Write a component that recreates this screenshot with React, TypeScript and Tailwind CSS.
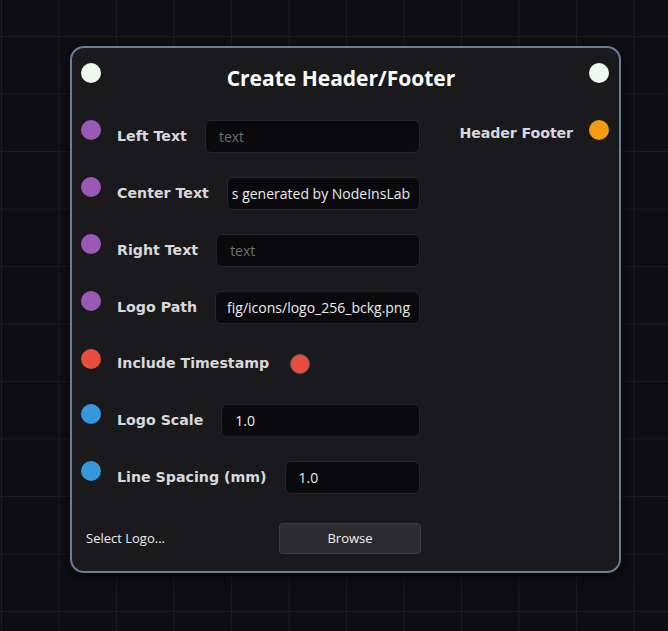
import React from 'react';

type Row = {
  label: string;
  color: string;
  kind: 'input' | 'check';
  value?: string;
  placeholder?: boolean;
  padLeft?: string;
  h: string;
};

const rows: Row[] = [
  { label: 'Left Text', color: 'bg-[#9b59b6]', kind: 'input', value: 'text', placeholder: true, h: 'h-[33px]' },
  { label: 'Center Text', color: 'bg-[#9b59b6]', kind: 'input', value: 's generated by NodeInsLab', padLeft: 'pl-[4px]', h: 'h-[33px]' },
  { label: 'Right Text', color: 'bg-[#9b59b6]', kind: 'input', value: 'text', placeholder: true, h: 'h-[33px]' },
  { label: 'Logo Path', color: 'bg-[#9b59b6]', kind: 'input', value: 'fig/icons/logo_256_bckg.png', padLeft: 'pl-[11px]', h: 'h-[33px]' },
  { label: 'Include Timestamp', color: 'bg-[#e74c3c]', kind: 'check', h: 'h-[31px]' },
  { label: 'Logo Scale', color: 'bg-[#3498db]', kind: 'input', value: '1.0', h: 'h-[33px]' },
  { label: 'Line Spacing (mm)', color: 'bg-[#3498db]', kind: 'input', value: '1.0', h: 'h-[33px]' },
];

function Socket({ color }: { color: string }) {
  return <span className={`block w-5 h-5 rounded-full shrink-0 ${color}`} />;
}

function Field({ row }: { row: Row }) {
  if (row.kind === 'check') {
    return (
      <span className="ml-[21px] block w-5 h-5 rounded-full bg-[#e74c3c] border border-[#5a5a5e]" />
    );
  }
  return (
    <div
      className={`ml-[18px] flex-1 min-w-0 h-[33px] flex items-center overflow-hidden rounded-md border border-[#26262a] bg-[#0a0a0c] pr-[8px] ${
        row.padLeft ?? 'pl-[13px]'
      }`}
    >
      <span
        className={`shrink-0 whitespace-nowrap text-[14px] font-['Open_Sans',sans-serif] ${
          row.placeholder ? 'text-[#6e6e72]' : 'text-[#ececec]'
        }`}
      >
        {row.value}
      </span>
    </div>
  );
}

export default function App() {
  return (
    <div className="w-[668px] h-[631px] overflow-hidden bg-[#0f0f13] bg-[linear-gradient(to_right,#1c1c21_1px,transparent_1px),linear-gradient(to_bottom,#1c1c21_1px,transparent_1px)] bg-[size:57.5px_57.5px] bg-[position:1px_36px] pt-[46px] pl-[70px]">
      <div className="w-[551px] h-[527px] rounded-[14px] border-2 border-[#6a7d96] bg-[#1a1a1d] shadow-[0_6px_14px_rgba(0,0,0,0.55)] flex flex-col">
        {/* header */}
        <div className="flex items-start pt-[15px] pl-[9px] pr-[10px]">
          <Socket color="bg-[#effaee]" />
          <h1 className="flex-1 pr-[8px] text-center text-white font-bold text-[21px] leading-[28px] pt-px font-['Open_Sans',sans-serif]">
            Create Header/Footer
          </h1>
          <Socket color="bg-[#effaee]" />
        </div>

        {/* body */}
        <div className="flex mt-[28px] pl-[9px] pr-[10px]">
          <div className="w-[339px] flex flex-col gap-[24.17px]">
            {rows.map((row) => (
              <div key={row.label} className={`flex items-start ${row.h}`}>
                <Socket color={row.color} />
                <div className="flex-1 min-w-0 flex items-center h-full ml-[16px]">
                  <span className="shrink-0 whitespace-nowrap text-[14.2px] font-bold text-[#d8d8dc] font-['DejaVu_Sans',sans-serif]">
                    {row.label}
                  </span>
                  <Field row={row} />
                </div>
              </div>
            ))}
          </div>
          <div className="flex-1 flex items-start justify-end">
            <span className="mt-[3px] mr-[16px] whitespace-nowrap text-[14.2px] font-bold text-[#d8d8dc] font-['DejaVu_Sans',sans-serif] tracking-[-0.1px]">
              Header Footer
            </span>
            <Socket color="bg-[#f39c12]" />
          </div>
        </div>

        {/* footer */}
        <div className="flex items-center mt-[29px] pl-[14px]">
          <span className="w-[193px] text-[13px] text-[#ececec] font-['Open_Sans',sans-serif]">Select Logo...</span>
          <button className="w-[142px] h-[31px] rounded-[4px] border border-[#3c3c42] bg-[#2c2c30] text-[13px] text-[#ececec] font-['Open_Sans',sans-serif]">
            Browse
          </button>
        </div>
      </div>
    </div>
  );
}
